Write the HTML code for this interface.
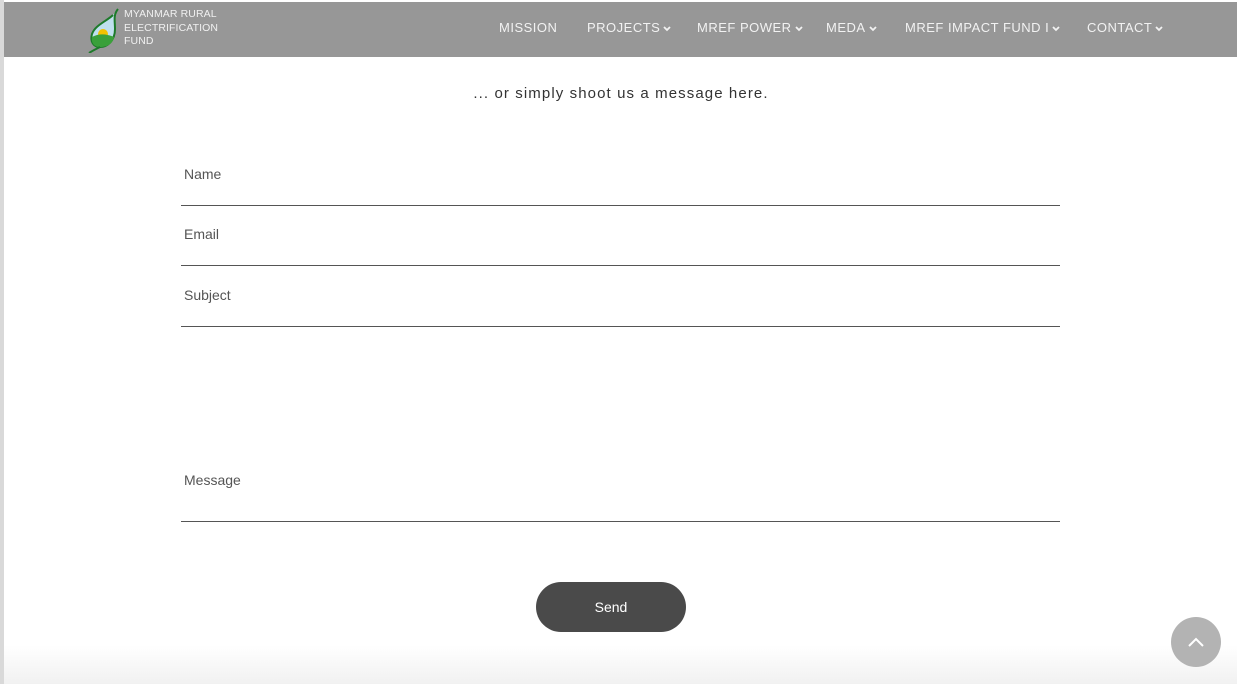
<!DOCTYPE html>
<html><head><meta charset="utf-8"><style>
*{margin:0;padding:0;box-sizing:border-box}
body{width:1237px;height:684px;overflow:hidden;background:#fff;font-family:"Liberation Sans",sans-serif;position:relative}
.strip{position:absolute;left:0;top:0;width:4px;height:684px;background:#d9d9d9}
.hdr{position:absolute;left:4px;top:2px;width:1233px;height:55px;background:#979797}
.nav{position:absolute;top:20px;color:#f2f2f2;font-size:13px;letter-spacing:.5px;white-space:nowrap}
.nav svg{vertical-align:middle;margin-left:3px}
.logo{position:absolute;left:124px;top:8px;color:#f0f0f0;font-size:10.5px;line-height:13.5px;letter-spacing:.1px}
.intro{position:absolute;top:85px;left:0;width:1242px;text-align:center;font-size:15px;color:#333;letter-spacing:1.1px}
.f{position:absolute;left:181px;width:879px;border-bottom:1px solid #555;color:#555;font-size:14px;padding-left:3px}
.send{position:absolute;left:536px;top:582px;width:150px;height:50px;border-radius:25px;background:#4a4a4a;color:#fff;font-size:14px;text-align:center;line-height:50px}
.top{position:absolute;left:1171px;top:617px;width:50px;height:50px;border-radius:50%;background:#b3b3b3}
.fade{position:absolute;left:4px;top:645px;width:1233px;height:39px;background:linear-gradient(#fff,#f1f1f1)}
</style></head><body>
<div class="strip"></div>
<div class="fade"></div>
<div class="hdr"></div>
<svg style="position:absolute;left:87px;top:7px" width="36" height="46" viewBox="0 0 36 46">
<path d="M31 2 C26 8 28 14 28 22 C28 34 20 40 13 40 C6 40 3 34 5 27 C8 18 20 14 26 8" fill="#bfe0ee" stroke="#1d7a2a" stroke-width="2"/>
<circle cx="16" cy="27" r="5" fill="#f2c200"/>
<path d="M5 30 C12 26 20 27 27 30 C26 37 20 40 13 40 C7 40 4 36 5 30Z" fill="#3aa03a"/>
<path d="M13 40 C9 42 5 44 2 46" stroke="#1d7a2a" stroke-width="2" fill="none"/>
</svg>
<div class="logo">MYANMAR RURAL<br>ELECTRIFICATION<br>FUND</div>
<div class="nav" style="left:499px">MISSION</div>
<div class="nav" style="left:587px">PROJECTS<svg width="8" height="6"><path d="M1 1l3 3 3-3" stroke="#f2f2f2" stroke-width="1.8" fill="none"/></svg></div>
<div class="nav" style="left:697px">MREF POWER<svg width="8" height="6"><path d="M1 1l3 3 3-3" stroke="#f2f2f2" stroke-width="1.8" fill="none"/></svg></div>
<div class="nav" style="left:826px">MEDA<svg width="8" height="6"><path d="M1 1l3 3 3-3" stroke="#f2f2f2" stroke-width="1.8" fill="none"/></svg></div>
<div class="nav" style="left:905px">MREF IMPACT FUND I<svg width="8" height="6"><path d="M1 1l3 3 3-3" stroke="#f2f2f2" stroke-width="1.8" fill="none"/></svg></div>
<div class="nav" style="left:1087px">CONTACT<svg width="8" height="6"><path d="M1 1l3 3 3-3" stroke="#f2f2f2" stroke-width="1.8" fill="none"/></svg></div>
<div class="intro">... or simply shoot us a message here.</div>
<div class="f" style="top:166px;height:40px">Name</div>
<div class="f" style="top:226px;height:40px">Email</div>
<div class="f" style="top:287px;height:40px">Subject</div>
<div class="f" style="top:472px;height:50px">Message</div>
<div class="send">Send</div>
<div class="top"><svg width="50" height="50"><path d="M18 29l7-7 7 7" stroke="#fff" stroke-width="2" fill="none"/></svg></div>
</body></html>
